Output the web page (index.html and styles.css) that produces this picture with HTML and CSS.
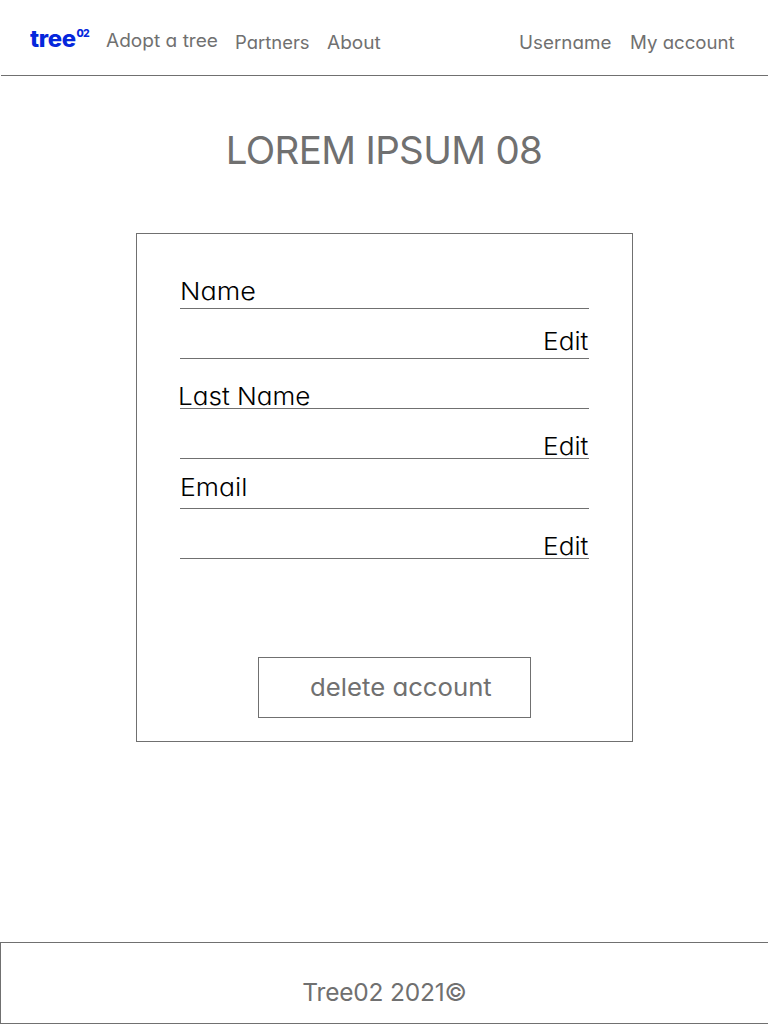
FILE: index.html
```html
<!DOCTYPE html>
<html lang="en">
<head>
<meta charset="utf-8">
<title>Tree02 - My account</title>
<link rel="stylesheet" href="styles.css">
</head>
<body>
<header class="nav">
  <a class="logo"><span class="logo-word">tree</span><span class="logo-num">02</span></a>
  <a class="link adopt">Adopt a tree</a>
  <a class="link partners">Partners</a>
  <a class="link about">About</a>
  <a class="link username">Username</a>
  <a class="link account">My account</a>
</header>
<main class="main">
  <h1 class="title">LOREM IPSUM 08</h1>
  <section class="card">
    <div class="row"><span class="text name">Name</span></div>
    <div class="row row-end"><a class="text edit raised">Edit</a></div>
    <div class="row"><span class="text last-name">Last Name</span></div>
    <div class="row row-end"><a class="text edit">Edit</a></div>
    <div class="row"><span class="text email">Email</span></div>
    <div class="row row-end"><a class="text edit">Edit</a></div>
    <button class="delete"><span class="delete-label">delete account</span></button>
  </section>
</main>
<footer class="footer"><span class="copy">Tree02 2021©</span></footer>
</body>
</html>
```
FILE: styles.css
```css
* { box-sizing: border-box; }
body {
  margin: 0;
  height: 1024px;
  display: flex;
  flex-direction: column;
  overflow: hidden;
  background: #fff;
  color: #707070;
  font-family: Inter, "Open Sans", sans-serif;
  font-weight: 400;
  font-feature-settings: "cv11";
}
.nav {
  display: flex;
  align-items: flex-start;
  height: 76px;
  margin-left: 1px;
  padding-left: 29px;
  border-bottom: 1px solid #707070;
  white-space: nowrap;
}
.logo {
  display: flex;
  width: 76px;
  color: #0527dc;
  font-weight: 800;
}
.logo-word { width: 46.5px; font-size: 22.5px; line-height: 24px; margin-top: 27px; letter-spacing: -0.3px; transform: scaleX(1.06); transform-origin: left; }
.logo-num { font-size: 10.5px; line-height: 12px; margin-top: 28px; letter-spacing: -0.7px; }
.link { font-size: 18px; line-height: 24px; margin-top: 31px; font-weight: 400; transform: scaleX(1.035); transform-origin: left; }
.adopt { width: 129px; margin-top: 29px; transform: scaleX(1.06); }
.partners { width: 92px; transform: scaleX(1.025); }
.about { width: 192px; transform: scaleX(1.06); }
.username { width: 111px; transform: scaleX(1.045); }
.main { flex: 1; }
.title {
  margin: 50px 0 0;
  height: 48px;
  font-size: 38.5px;
  line-height: 48px;
  font-weight: 400;
  letter-spacing: -0.65px;
  text-align: center;
}
.card {
  display: flex;
  flex-direction: column;
  width: 497px;
  height: 509px;
  margin: 59px 0 0 136px;
  padding: 25px 43.5px 0 42.5px;
  border: 1px solid #707070;
}
.row {
  display: flex;
  align-items: flex-end;
  height: 50px;
  border-bottom: 1px solid #707070;
  color: #000;
}
.row-end { justify-content: flex-end; }
.text { font-size: 24.5px; line-height: 24px; font-weight: 300; transform: scaleX(1.085); transform-origin: left; }
.name { margin-bottom: 5.5px; transform: scaleX(1.1); }
.last-name { margin: 0 0 0.5px -2px; transform: scaleX(1.065); }
.email { margin-bottom: 9px; }
.edit { margin-bottom: 0.5px; transform: scaleX(1.07); transform-origin: right; }
.raised { margin-bottom: 5.5px; }
.delete {
  width: 273px;
  height: 61px;
  margin: 98px 0 0 78.5px;
  padding: 0 0 0 50.5px;
  border: 1px solid #707070;
  background: none;
  color: inherit;
  font: inherit;
  font-feature-settings: inherit;
  font-size: 24.5px;
  line-height: 59px;
  text-align: left;
  white-space: nowrap;
}
.delete-label { display: inline-block; transform: scaleX(1.05); transform-origin: left; }
.footer {
  height: 82px;
  margin-bottom: 0;
  padding-top: 33px;
  border: 1px solid #707070;
  border-right: 0;
  text-align: center;
}
.copy { display: block; font-size: 24.5px; line-height: 32px; letter-spacing: -0.2px; }
```
